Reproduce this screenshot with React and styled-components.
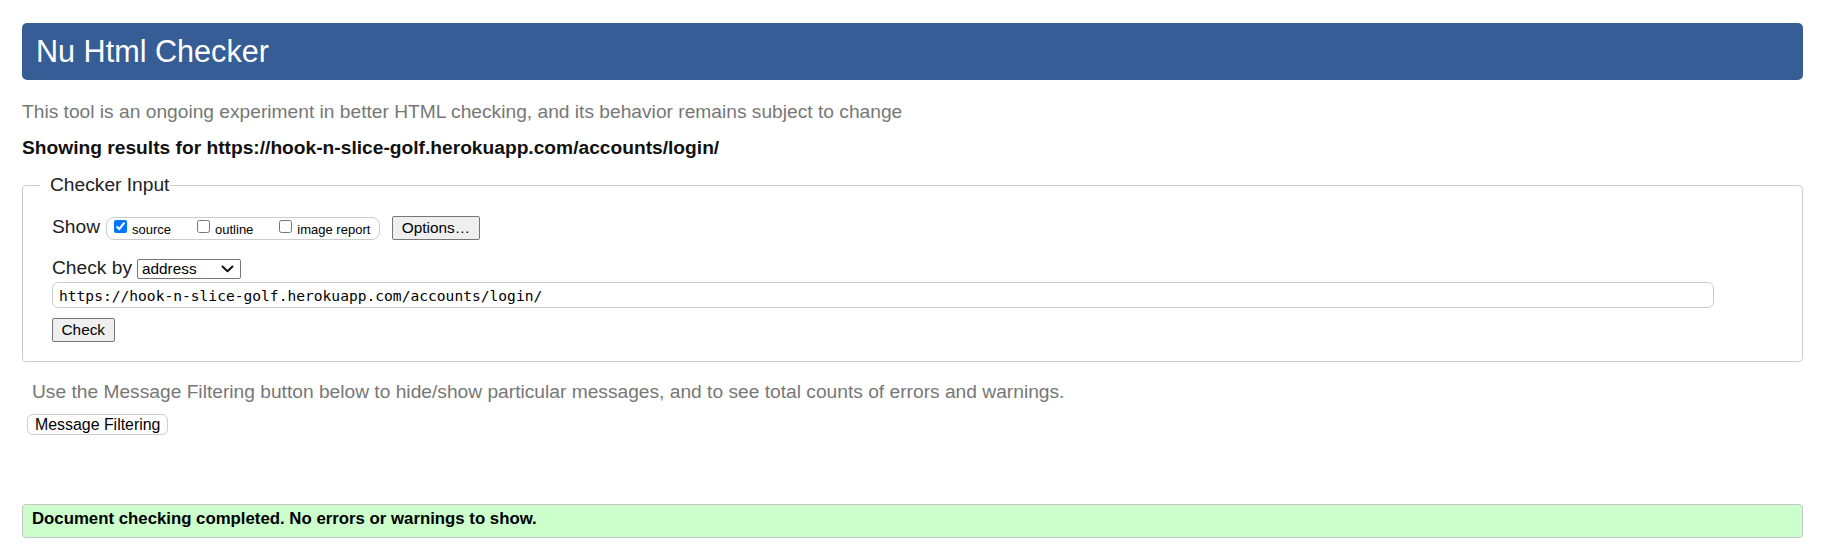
import React from "react";
import styled, { createGlobalStyle } from "styled-components";

const Global = createGlobalStyle`
  html, body { margin: 0; padding: 0; background: #fff; }
  body {
    font-family: "Liberation Sans", Arial, sans-serif;
    font-size: 19.2px;
    color: #000;
  }
  * { box-sizing: border-box; }
`;

const Page = styled.div`
  padding: 23px 28px 0 22px;
`;

const Title = styled.h1`
  margin: 0;
  height: 57px;
  line-height: 56px;
  padding: 0 14px;
  background: #365d95;
  color: #fff;
  font-weight: normal;
  font-size: 30.6px;
  border-radius: 5px;
`;

const Note = styled.p`
  margin: ${(p) => p.$top}px 0 0;
  padding-left: ${(p) => p.$indent || 0}px;
  line-height: 22px;
  color: #777;
`;

const Results = styled.p`
  margin: 14px 0 0;
  line-height: 22px;
  font-weight: bold;
  color: #111;
`;

const Fieldset = styled.fieldset`
  margin: 15px 0 0;
  padding: 0 0 19px 17px;
  border: 1px solid #ccc;
  border-radius: 4px;
  min-inline-size: 0;
`;

const Legend = styled.legend`
  padding: 0 1px 0 10px;
  line-height: 22px;
  color: #222;
`;

const FieldBody = styled.div`
  padding: 0 88px 0 12px;
  display: flex;
  flex-direction: column;
  align-items: flex-start;
`;

const Row = styled.div`
  display: flex;
  align-items: baseline;
  margin-top: ${(p) => p.$top}px;
`;

const Label = styled.span`
  line-height: 22px;
  color: #222;
  margin-right: ${(p) => p.$gap || 0}px;
`;

const OptionGroup = styled.span`
  display: inline-flex;
  align-items: center;
  height: 23px;
  padding: 0 9px 0 3px;
  border: 1px solid #ccc;
  border-radius: 8px;
  margin-right: 12px;
`;

const CheckLabel = styled.label`
  display: inline-flex;
  align-items: flex-end;
  font-size: 13px;
  line-height: 15px;
  color: #000;
  & + & { margin-left: 22px; }
`;

const Box = styled.input`
  width: 13px;
  height: 13px;
  margin: 0 5px 4px 4px;
  accent-color: #0075ff;
`;

const Button = styled.button`
  font-family: "Liberation Sans", Arial, sans-serif;
  font-size: 15.36px;
  height: 24px;
  padding: 0 8.5px;
  background: #efefef;
  color: #000;
  border: 1px solid #767676;
  border-radius: 2px;
`;

const SelectWrap = styled.span`
  position: relative;
  display: inline-flex;
  margin-left: 5px;
`;

const Select = styled.select`
  appearance: none;
  -webkit-appearance: none;
  font-family: "Liberation Sans", Arial, sans-serif;
  font-size: 15.36px;
  line-height: 18px;
  width: 104px;
  height: 20px;
  padding: 0 20px 0 4px;
  background: #fff;
  color: #000;
  border: 1px solid #767676;
  border-radius: 2px;
`;

const Chevron = styled.svg`
  position: absolute;
  left: 84px;
  top: 6px;
  width: 13px;
  height: 8px;
  pointer-events: none;
`;

const UrlInput = styled.input`
  width: 100%;
  height: 26px;
  margin-top: 3px;
  padding: 0 6px;
  font-family: "DejaVu Sans Mono", "Liberation Mono", monospace;
  font-size: 14.6px;
  color: #000;
  border: 1px solid #ccc;
  border-radius: 6px;
  background: #fff;
`;

const CheckButton = styled(Button)`
  margin-top: 10px;
`;

const FilterButton = styled.button`
  display: block;
  margin: 11px 0 0 5px;
  height: 21px;
  padding: 0 7px;
  font-family: "Liberation Sans", Arial, sans-serif;
  font-size: 15.9px;
  color: #000;
  background: #fff;
  border: 1px solid #ccc;
  border-radius: 6px;
`;

const Success = styled.div`
  margin-top: 69px;
  padding: 4px 9px 8px;
  line-height: 20px;
  font-size: 16.8px;
  font-weight: bold;
  color: #000;
  background: #ccffcc;
  border: 1px solid #c4c4c4;
  border-radius: 4px;
`;

export default function App() {
  const url = "https://hook-n-slice-golf.herokuapp.com/accounts/login/";
  return (
    <Page>
      <Global />
      <Title>Nu Html Checker</Title>
      <Note $top={21}>
        This tool is an ongoing experiment in better HTML checking, and its behavior remains subject to change
      </Note>
      <Results>Showing results for {url}</Results>
      <Fieldset>
        <Legend>Checker Input</Legend>
        <FieldBody>
          <Row $top={20}>
            <Label $gap={6}>Show</Label>
            <OptionGroup>
              <CheckLabel>
                <Box type="checkbox" defaultChecked />
                source
              </CheckLabel>
              <CheckLabel>
                <Box type="checkbox" />
                outline
              </CheckLabel>
              <CheckLabel>
                <Box type="checkbox" />
                image report
              </CheckLabel>
            </OptionGroup>
            <Button type="button">Options…</Button>
          </Row>
          <Row $top={17}>
            <Label>Check by</Label>
            <SelectWrap>
              <Select defaultValue="address">
                <option value="address">address</option>
                <option value="file">file upload</option>
                <option value="text">text input</option>
              </Select>
              <Chevron viewBox="0 0 13 8" aria-hidden="true">
                <path d="M1.5 1.5 L6.5 6.2 L11.5 1.5" fill="none" stroke="#111" strokeWidth="2" strokeLinecap="round" strokeLinejoin="round" />
              </Chevron>
            </SelectWrap>
          </Row>
          <UrlInput type="url" defaultValue={url} />
          <CheckButton type="button">Check</CheckButton>
        </FieldBody>
      </Fieldset>
      <Note $top={19} $indent={10}>
        Use the Message Filtering button below to hide/show particular messages, and to see total counts of errors and warnings.
      </Note>
      <FilterButton type="button">Message Filtering</FilterButton>
      <Success>Document checking completed. No errors or warnings to show.</Success>
    </Page>
  );
}
